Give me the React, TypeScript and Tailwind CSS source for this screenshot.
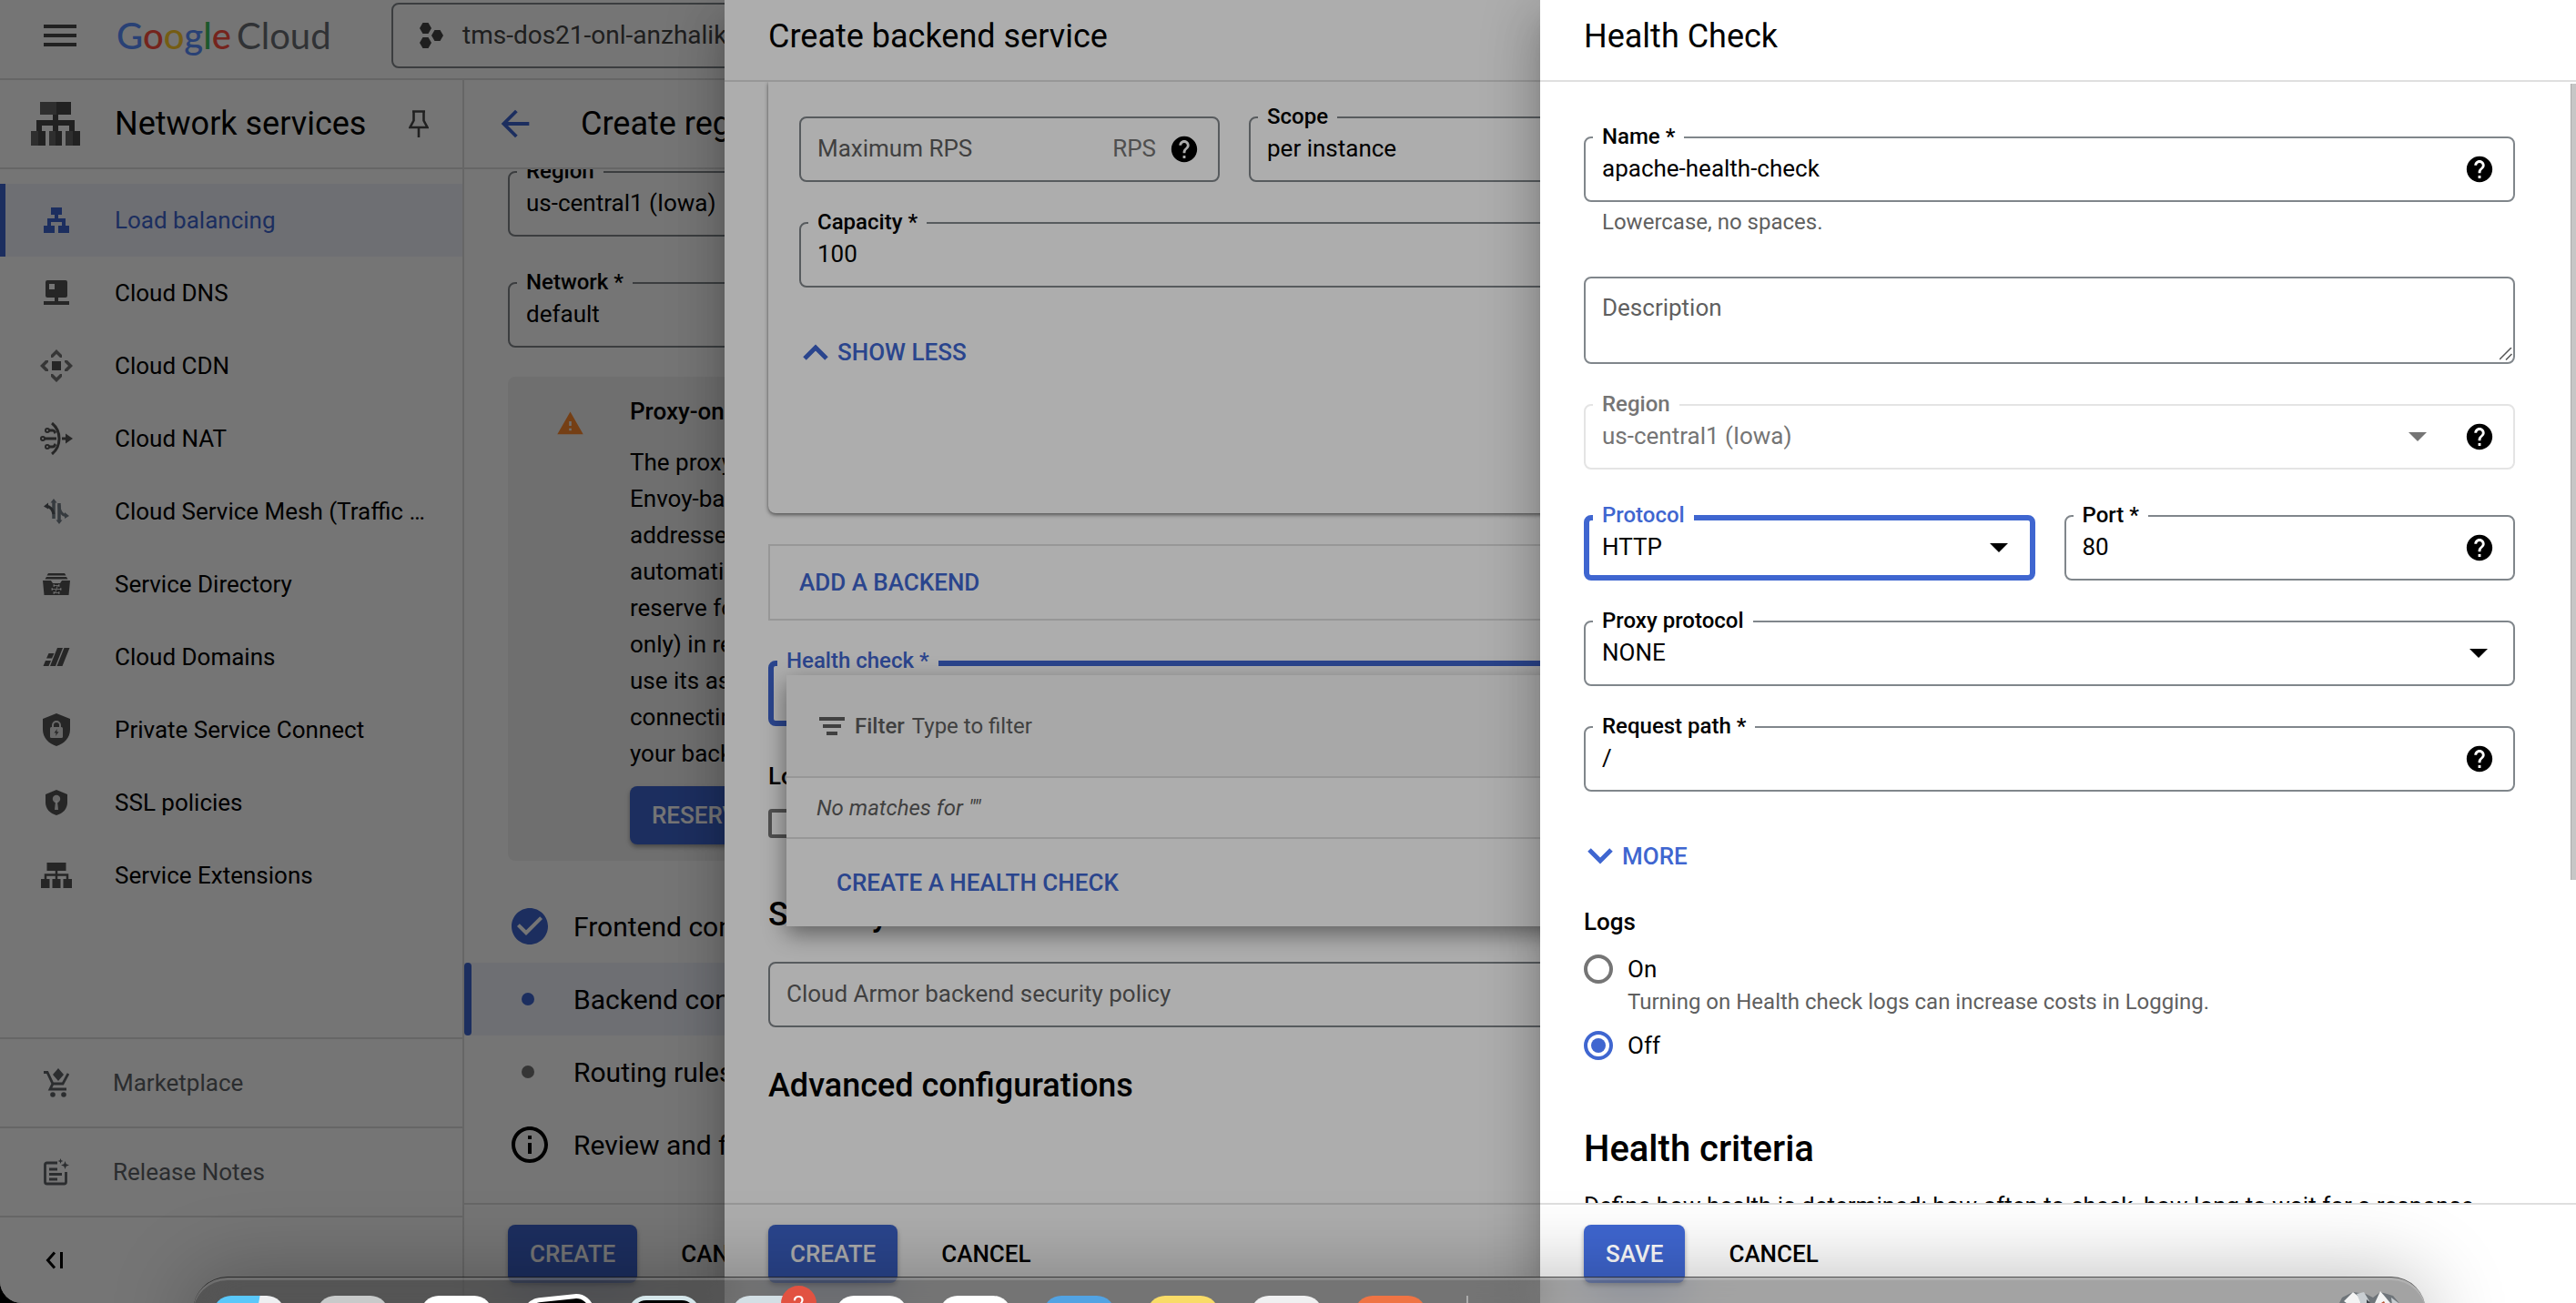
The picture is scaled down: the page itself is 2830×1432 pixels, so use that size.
import React, { useState } from 'react';
import { MdArrowBack, MdCheckCircle, MdHelp, MdInfoOutline, MdWarning } from 'react-icons/md';

/* ---------- shared controls ---------- */

type FieldProps = {
  id: string;
  label?: string;
  className?: string;
  active?: boolean;
  disabled?: boolean;
  children?: React.ReactNode;
};

function Field({ id, label, className = '', active, disabled, children }: FieldProps) {
  const frame = active
    ? 'border-[6px] border-[#3f66d0] pl-[14px] pr-6'
    : disabled
      ? 'border-2 border-[#e4e4e4] pl-[18px] pr-5'
      : 'border-2 border-[#80868b] pl-[18px] pr-5';
  const tone = active ? 'text-[#3f66d0]' : disabled ? 'text-[#757575]' : 'text-black';
  const place = active ? '-top-[22px] left-1' : '-top-[18px] left-2';
  return (
    <div className={`relative flex h-[72px] items-center rounded-lg ${frame} ${className}`}>
      {label && (
        <label htmlFor={id} className={`absolute ${place} bg-white px-[10px] text-[24px] leading-8 font-medium whitespace-nowrap ${tone}`}>
          {label}
        </label>
      )}
      {children}
    </div>
  );
}

const inputClass = 'h-full min-w-0 flex-1 bg-transparent pb-[2px] text-[26px] outline-none placeholder:text-[#5f5f5f]';
const selectClass = 'h-full min-w-0 flex-1 appearance-none bg-transparent pb-[2px] text-[26px] opacity-100 outline-none';

function Help() {
  return (
    <button type="button" aria-label="Help" className="shrink-0">
      <MdHelp className="size-[34px]" />
    </button>
  );
}

function Caret({ className = 'mr-2' }: { className?: string }) {
  return (
    <svg viewBox="0 0 20 10" className={`pointer-events-none h-[10px] w-5 shrink-0 ${className}`} fill="currentColor" aria-hidden="true">
      <path d="M0 0h20L10 10z" />
    </svg>
  );
}

function Chevron({ up }: { up?: boolean }) {
  return (
    <svg viewBox="0 0 28 18" className="h-[18px] w-7 shrink-0" fill="none" stroke="currentColor" strokeWidth="5" aria-hidden="true">
      <path d={up ? 'M2 16L14 4l12 12' : 'M2 2l12 12L26 2'} />
    </svg>
  );
}

function PrimaryButton({ children }: { children: React.ReactNode }) {
  return (
    <button type="button" className="h-16 rounded-lg bg-[#3f66d0] px-6 text-[26px] font-medium text-white shadow-[0_3px_5px_rgba(0,0,0,0.35)]">
      {children}
    </button>
  );
}

function Footer({ action }: { action: string }) {
  return (
    <footer className="flex h-[110px] shrink-0 items-start gap-12 border-t-2 border-[#dfdfdf] bg-white px-12 pt-[22px]">
      <PrimaryButton>{action}</PrimaryButton>
      <button type="button" className="h-16 text-[26px] font-medium">CANCEL</button>
    </footer>
  );
}

/* ---------- sidebar icons ---------- */

const LoadBalancingIcon = () => (
  <svg viewBox="0 0 28 28" className="size-7" fill="currentColor"><path d="M8 0h12v8h-4v4h8v8h4v8H16v-8h4v-4H8v4h4v8H0v-8h4v-8h8V8H8z" /></svg>
);
const DnsIcon = () => (
  <svg viewBox="0 0 28 28" className="size-7" fill="currentColor"><path fillRule="evenodd" d="M4 0h20a2 2 0 0 1 2 2v15a2 2 0 0 1-2 2h-8v4h12v4H0v-4h12v-4H4a2 2 0 0 1-2-2V2a2 2 0 0 1 2-2zm2 4v6h6V4z" /></svg>
);
const CdnIcon = () => (
  <svg viewBox="0 0 36 36" className="size-9" fill="currentColor">
    <path d="M13 13h10v10H13z" />
    <path opacity=".8" d="M18 0l6 6v3l-2 0-4-4-4 4h-2V6zM18 36l6-6v-3h-2l-4 4-4-4h-2v3zM0 18l6-6h3v2l-4 4 4 4v2H6zM36 18l-6-6h-3v2l4 4-4 4v2h3z" />
  </svg>
);
const NatIcon = () => (
  <svg viewBox="0 0 36 36" className="size-9" fill="none" stroke="currentColor" strokeWidth="3">
    <path d="M13 1c5 4 8 10 8 17s-3 13-8 17" />
    <path d="M5 18h13M24 18h6M10 9h4c2 0 2 2 3 3M10 27h4c2 0 2-2 3-3" />
    <circle cx="3" cy="18" r="2" strokeWidth="2" /><circle cx="8" cy="9" r="2" strokeWidth="2" /><circle cx="8" cy="27" r="2" strokeWidth="2" />
    <path d="M28 12.500l8 5.500-8 5.500z" fill="currentColor" stroke="none" />
  </svg>
);
const MeshIcon = () => (
  <svg viewBox="0 0 28 28" className="size-7 text-[#77808a]" fill="none" stroke="currentColor" strokeWidth="3.500">
    <path d="M11 22V3M17 5v20" />
    <path d="M11 0L7.500 4.500h7zM17 28l-3.500-4.500h7z" fill="currentColor" stroke="none" />
    <path d="M17 7c0 7 3 11 8 12" strokeWidth="3" /><path d="M28 19l-5-4v7z" fill="currentColor" stroke="none" />
    <path d="M3 8c5 1 7 4 8 9" stroke="#55595e" strokeWidth="3" /><path d="M0 8.500l5-4v7z" fill="#55595e" stroke="none" />
  </svg>
);
const DirectoryIcon = () => (
  <svg viewBox="0 0 30 24" className="h-6 w-[30px]" fill="currentColor">
    <path d="M6 0h18l1.500 2.500h-21zM4 4h22l1.500 2.500h-25z" />
    <path d="M0 8h9l2 3h8l2-3h9l-1.500 16h-27z" />
    <path d="M12 13.500h6M10 17.500h10M12 21.500h6M16.500 13l-3 9" stroke="#fff" strokeWidth="1" opacity=".8" />
    <path d="M11.500 13.500h1.500M17 13.500h1.500M9.500 17.500H11M19 17.500h1.500M11.500 21.500H13M17 21.500h1.500" stroke="#fff" strokeWidth="2.500" opacity=".8" />
  </svg>
);
const DomainsIcon = () => (
  <svg viewBox="0 0 30 20" className="h-5 w-[30px]" fill="currentColor">
    <path d="M23.500 0h6l-8 20h-6zM16 0h6l-8 20H8zM6.500 6h6L10 11.500H4zM3 14h6l-2.500 6h-6z" />
  </svg>
);
const PscIcon = () => (
  <svg viewBox="0 0 30 36" className="h-9 w-[30px]" fill="currentColor">
    <path d="M15 0l15 6v12c0 8.500-6.500 15.500-15 18C6.500 33.500 0 26.500 0 18V6z" />
    <rect x="8" y="15" width="14" height="12" rx="1.500" fill="#fff" opacity=".85" />
    <path d="M11 15v-2a4 4 0 0 1 8 0v2" stroke="#fff" strokeWidth="2" fill="none" opacity=".85" />
    <path d="M15.800 17L12.500 21.500h2.200l-.6 3.500 3.400-4.800h-2.200z" />
  </svg>
);
const SslIcon = () => (
  <svg viewBox="0 0 24 28" className="h-7 w-6" fill="currentColor">
    <path d="M12 0l12 5v9c0 7-5 12-12 14C5 26 0 21 0 14V5z" />
    <circle cx="12" cy="10" r="4.200" fill="#fff" opacity=".85" /><path d="M11 12h2l1 10h-4z" fill="#fff" opacity=".85" />
  </svg>
);
const ExtensionsIcon = () => (
  <svg viewBox="0 0 34 28" className="h-7 w-[34px]" fill="currentColor">
    <path d="M6.500 0h21v9h-21zM0 18h9.500v10H0zM12.500 18h9v10h-9zM24.500 18H34v10h-9.500z" />
    <path d="M17 8v11M5 19v-5.500h24V19" stroke="currentColor" strokeWidth="2.500" fill="none" />
  </svg>
);
const MarketplaceIcon = () => (
  <svg viewBox="0 0 28 32" className="h-8 w-7" fill="none" stroke="currentColor" strokeWidth="2.800">
    <path d="M0 4.500h4l6 12.500h11l6-11M10 17l-3 6h18" />
    <path d="M16 0l6 7-6 7-6-7z" fill="currentColor" stroke="none" />
    <circle cx="10" cy="29" r="2.800" fill="currentColor" stroke="none" /><circle cx="22" cy="29" r="2.800" fill="currentColor" stroke="none" />
  </svg>
);
const ReleaseIcon = () => (
  <svg viewBox="0 0 28 30" className="h-[30px] w-7" fill="none" stroke="currentColor" strokeWidth="2.800">
    <path d="M15 5H3.500A2 2 0 0 0 1.500 7v19a2 2 0 0 0 2 2h19a2 2 0 0 0 2-2V15" />
    <path d="M6 12h9M6 17.500h14M6 23h9" />
    <path d="M23.500 3l1.200 3.300L28 7.500l-3.300 1.200L23.500 12l-1.200-3.300L19 7.500l3.300-1.200zM18.500 0l.8 2.200 2.200.8-2.200.8-.8 2.200-.8-2.200-2.200-.8 2.200-.8z" fill="currentColor" stroke="none" />
  </svg>
);

const navItems: { label: string; icon: React.ReactNode; current?: boolean }[] = [
  { label: 'Load balancing', icon: <LoadBalancingIcon />, current: true },
  { label: 'Cloud DNS', icon: <DnsIcon /> },
  { label: 'Cloud CDN', icon: <CdnIcon /> },
  { label: 'Cloud NAT', icon: <NatIcon /> },
  { label: 'Cloud Service Mesh (Traffic Director)', icon: <MeshIcon /> },
  { label: 'Service Directory', icon: <DirectoryIcon /> },
  { label: 'Cloud Domains', icon: <DomainsIcon /> },
  { label: 'Private Service Connect', icon: <PscIcon /> },
  { label: 'SSL policies', icon: <SslIcon /> },
  { label: 'Service Extensions', icon: <ExtensionsIcon /> },
];

function TopBar() {
  return (
    <header className="flex h-[88px] shrink-0 items-center border-b-2 border-[#dfdfdf] pb-2 pl-12">
      <button type="button" aria-label="Main menu" className="text-[#4a4a4a]">
        <svg viewBox="0 0 36 24" className="h-6 w-9" fill="currentColor"><path d="M0 0h36v4H0zM0 10h36v4H0zM0 20h36v4H0z" /></svg>
      </button>
      <a href="#home" className="ml-11 flex w-[302px] gap-[6px] font-[Lato] text-[40px] leading-[56px] whitespace-nowrap">
        <span className="font-medium">
          <span className="text-[#5a90ff]">G</span><span className="text-[#ff5040]">o</span><span className="text-[#ffca2c]">o</span><span className="text-[#5a90ff]">g</span><span className="text-[#40c060]">l</span><span className="text-[#ff5040]">e</span>
        </span>
        <span className="text-[#6a6e73]">Cloud</span>
      </a>
      <button type="button" className="flex h-[72px] w-[480px] items-center gap-[21px] rounded-lg border-2 border-[#80868b] pl-[29px] text-[28px] text-[#444]">
        <svg viewBox="0 0 26 28" className="h-7 w-[26px] shrink-0" fill="currentColor">
          <path d="M3.500 0h6L13 6l-3.500 6h-6L0 6zM3.500 16h6l3.500 6-3.500 6h-6L0 22zM16.500 8h6l3.500 6-3.500 6h-6L13 14z" />
        </svg>
        tms-dos21-onl-anzhalika
      </button>
    </header>
  );
}

function Sidebar() {
  return (
    <aside className="flex w-[510px] shrink-0 flex-col border-r-2 border-[#dfdfdf]">
      <div className="flex h-[98px] shrink-0 items-center border-b-2 border-[#dfdfdf] pl-[34px]">
        <svg viewBox="0 0 54 48" className="h-12 w-[54px] text-[#666]" fill="currentColor">
          <path d="M10 0h34v14H10zM0 32h16v16H0zM20 32h14v16H20zM38 32h16v16H38z" />
          <path fill="#4a4a4a" d="M28 0h16v14H28zM8 32h8v16H8zM27 32h7v16h-7zM46 32h8v16h-8zM24 14h6v6h18v12h-6v-6H30v6h-6v-6H12v6H6V20h18z" />
        </svg>
        <h2 className="ml-[38px] text-[36px] leading-[48px]">Network services</h2>
        <button type="button" aria-label="Pin" className="ml-auto mr-[37px] text-[#4a4a4a]">
          <svg viewBox="0 0 22 30" className="h-[30px] w-[22px]" fill="none" stroke="currentColor" strokeWidth="2.600">
            <path d="M4 1.500h14M5.500 2v9.500L1.500 19h19l-4-7.500V2M11 19v11" />
          </svg>
        </button>
      </div>
      <nav className="pt-4">
        {navItems.map((item) => (
          <a
            key={item.label}
            href="#nav"
            className={`flex h-20 items-center border-l-[6px] pr-9 text-[26px] ${item.current ? 'border-[#3f66d0] bg-[#eff2fb] text-[#3f66d0]' : 'border-transparent'}`}
          >
            <span className={`ml-[38px] flex w-9 shrink-0 justify-center ${item.current ? '' : 'text-[#555]'}`}>{item.icon}</span>
            <span className="ml-[46px] truncate">{item.label}</span>
          </a>
        ))}
      </nav>
      <div className="mt-auto">
        <a href="#marketplace" className="flex h-[98px] items-center border-t-2 border-[#dfdfdf] pl-12 text-[26px] text-[#5f6368]">
          <MarketplaceIcon /><span className="ml-12">Marketplace</span>
        </a>
        <a href="#release-notes" className="flex h-[98px] items-center border-t-2 border-[#dfdfdf] pl-12 text-[26px] text-[#5f6368]">
          <ReleaseIcon /><span className="ml-12">Release Notes</span>
        </a>
        <div className="flex h-24 items-center border-t-2 border-[#dfdfdf] pl-[50px]">
          <button type="button" aria-label="Collapse navigation">
            <svg viewBox="0 0 20 20" className="size-5" fill="none" stroke="currentColor" strokeWidth="3"><path d="M10 1.500L2.500 10l7.500 8.500M17.500 1v18" /></svg>
          </button>
        </div>
      </div>
    </aside>
  );
}

const noticeLines = ['The proxy-only subnet', 'Envoy-based proxies', 'addresses that are', 'automatically set', 'reserve for (proxy', 'only) in region and', 'use its assigned', 'connecting to', 'your backends.'];

function StepRow({ label, icon, current }: { label: string; icon: React.ReactNode; current?: boolean }) {
  return (
    <li className={`flex h-20 items-center text-[30px] ${current ? 'bg-[#eff2fb]' : ''}`}>
      <span className={`h-full w-2 rounded ${current ? 'bg-[#3f66d0]' : ''}`} />
      <span className="ml-10 flex w-12 justify-center">{icon}</span>
      <span className="ml-6">{label}</span>
    </li>
  );
}

function MainPage() {
  const [region, setRegion] = useState('us-central1 (Iowa)');
  const [network, setNetwork] = useState('default');
  return (
    <main className="flex min-w-0 flex-1 flex-col">
      <div className="flex h-[98px] shrink-0 items-center border-b-2 border-[#dfdfdf] pl-[33px]">
        <button type="button" aria-label="Back" className="text-[#3f66d0]"><MdArrowBack className="size-[46px]" /></button>
        <h1 className="ml-[49px] text-[36px] leading-[48px] whitespace-nowrap">Create regional load balancer</h1>
      </div>
      <div className="min-h-0 flex-1 overflow-hidden pt-[2px]">
        <div className="w-[700px] pl-12">
          <Field id="page-region" label="Region">
            <input id="page-region" className={inputClass} value={region} onChange={(e) => setRegion(e.target.value)} />
          </Field>
          <Field id="page-network" label="Network *" className="mt-[50px]">
            <input id="page-network" className={inputClass} value={network} onChange={(e) => setNetwork(e.target.value)} />
          </Field>
          <section className="mt-8 flex rounded-lg bg-[#f2f2f2] pt-[18px] pb-[18px] pl-[53px]">
            <MdWarning className="mt-[18px] size-[31px] shrink-0 text-[#ff8a30]" />
            <div className="ml-[50px] text-[26px] leading-10 whitespace-nowrap">
              <h3 className="font-medium">Proxy-only subnet required</h3>
              <p className="mt-4 mb-4">{noticeLines.map((line) => <span key={line} className="block">{line}</span>)}</p>
              <PrimaryButton>RESERVE SUBNET</PrimaryButton>
            </div>
          </section>
        </div>
        <ol className="mt-8">
          <StepRow label="Frontend configuration" icon={<MdCheckCircle className="size-12 shrink-0 text-[#3f66d0]" />} />
          <StepRow current label="Backend configuration" icon={<span className="mr-1 size-[14px] rounded-full bg-[#3f66d0]" />} />
          <StepRow label="Routing rules" icon={<span className="mr-1 size-[14px] rounded-full bg-[#757575]" />} />
          <StepRow label="Review and finalize" icon={<MdInfoOutline className="size-12 shrink-0" />} />
        </ol>
      </div>
      <Footer action="CREATE" />
    </main>
  );
}

/* ---------- drawers ---------- */

function Drawer({ title, className, children, action }: { title: string; className: string; children: React.ReactNode; action: string }) {
  return (
    <section
      aria-label={title}
      className={`absolute inset-y-0 right-0 isolate flex flex-col bg-white shadow-[0_16px_20px_-10px_rgba(0,0,0,0.2),0_32px_48px_4px_rgba(0,0,0,0.14),0_12px_60px_10px_rgba(0,0,0,0.12)] ${className}`}
    >
      <header className="h-[90px] shrink-0 border-b-2 border-[#dfdfdf] px-12">
        <h2 className="text-[36px] leading-[80px]">{title}</h2>
      </header>
      <div className="min-h-0 flex-1 overflow-hidden px-12">{children}</div>
      <Footer action={action} />
    </section>
  );
}

function BackendDrawer() {
  const [capacity, setCapacity] = useState('100');
  return (
    <Drawer title="Create backend service" className="left-[796px]" action="CREATE">
      <div className="rounded-b-lg px-[34px] pt-[38px] pb-[157px] shadow-[0_2px_4px_rgba(0,0,0,0.5),0_0_2px_rgba(0,0,0,0.15)]">
        <div className="flex gap-8">
          <Field id="max-rps" className="w-[462px]">
            <input id="max-rps" aria-label="Maximum RPS" placeholder="Maximum RPS" className={inputClass} />
            <span className="mr-[14px] pb-[2px] text-[26px] text-[#757575]">RPS</span>
            <Help />
          </Field>
          <Field id="scope" label="Scope" className="flex-1">
            <select id="scope" className={selectClass}><option>per instance</option></select>
            <Caret />
          </Field>
        </div>
        <Field id="capacity" label="Capacity *" className="mt-11">
          <input id="capacity" className={inputClass} value={capacity} onChange={(e) => setCapacity(e.target.value)} />
        </Field>
        <button type="button" className="mt-[51px] ml-1 flex h-10 items-center gap-[10px] text-[26px] font-medium text-[#3f66d0]">
          <Chevron up />
          SHOW LESS
        </button>
      </div>

      <button type="button" className="mt-[34px] flex h-[84px] w-full items-center border-2 border-[#dfdfdf] pl-8 text-[26px] font-medium text-[#3f66d0]">
        ADD A BACKEND
      </button>

      <div className="relative mt-11">
        <Field id="health-check" label="Health check *" active>
          <input id="health-check" className={inputClass} />
        </Field>
        <div className="absolute top-4 right-0 left-5 z-10 bg-white shadow-[0_8px_24px_rgba(0,0,0,0.45)]">
          <div className="flex h-[113px] items-center border-b-2 border-[#dfdfdf] bg-[#f8f8f8] pl-9 text-[24px] text-[#5f5f5f]">
            <svg viewBox="0 0 28 20" className="h-5 w-7 shrink-0" fill="currentColor" aria-hidden="true"><path d="M0 0h28v4H0zM4 8h20v4H4zM8 16h12v4H8z" /></svg>
            <label htmlFor="hc-filter" className="ml-[11px] font-medium">Filter</label>
            <input id="hc-filter" placeholder="Type to filter" className="ml-2 flex-1 bg-transparent outline-none placeholder:text-[#5f5f5f]" />
          </div>
          <p className="flex h-[67px] items-center border-b-2 border-[#dfdfdf] pl-[33px] text-[24px] text-[#5f5f5f] italic">No matches for ""</p>
          <button type="button" className="flex h-24 w-full items-center pl-[55px] text-[26px] font-medium text-[#3f66d0]">CREATE A HEALTH CHECK</button>
        </div>
      </div>

      <h3 className="mt-[35px] text-[26px] leading-10 font-medium">Logging</h3>
      <input type="checkbox" aria-label="Enable logging" className="mt-4 block size-8 appearance-none rounded border-4 border-[#757575]" />
      <h2 className="mt-[60px] text-[36px] leading-[48px] font-medium">Security</h2>
      <Field id="armor" className="mt-7">
        <input id="armor" aria-label="Cloud Armor backend security policy" placeholder="Cloud Armor backend security policy" className={inputClass} />
      </Field>
      <h2 className="mt-10 text-[36px] leading-[48px] font-medium">Advanced configurations</h2>
    </Drawer>
  );
}

const radioClass =
  'size-8 shrink-0 appearance-none rounded-full border-4 border-[#757575] bg-clip-content p-1 checked:border-[#3f66d0] checked:bg-[#3f66d0]';

function HealthCheckDrawer() {
  const [name, setName] = useState('apache-health-check');
  const [port, setPort] = useState('80');
  const [path, setPath] = useState('/');
  const [logs, setLogs] = useState('off');
  return (
    <Drawer title="Health Check" className="w-[1138px]" action="SAVE">
      <form className="pt-[60px] pr-[19px]">
        <Field id="hc-name" label="Name *">
          <input id="hc-name" className={inputClass} value={name} onChange={(e) => setName(e.target.value)} />
          <Help />
        </Field>
        <p className="mt-[6px] pl-5 text-[24px] leading-8 text-[#5f5f5f]">Lowercase, no spaces.</p>

        <div className="relative mt-11 h-24">
          <textarea
            aria-label="Description"
            placeholder="Description"
            className="block h-full w-full resize-none rounded-lg border-2 border-[#80868b] px-[18px] py-3 text-[26px] leading-10 outline-none placeholder:text-[#5f5f5f]"
          />
          <svg viewBox="0 0 14 14" className="absolute right-[3px] bottom-1 size-[14px]" stroke="#555" strokeWidth="1.500" aria-hidden="true">
            <path d="M0 13L13 0M7 13.500L13.500 7" />
          </svg>
        </div>

        <Field id="hc-region" label="Region" disabled className="mt-11">
          <select id="hc-region" disabled className={`${selectClass} text-[#757575]`}><option>us-central1 (Iowa)</option></select>
          <Caret className="mr-[41px] text-[#757575]" />
          <Help />
        </Field>

        <div className="mt-[50px] grid grid-cols-2 gap-8">
          <Field id="hc-protocol" label="Protocol" active>
            <select id="hc-protocol" className={selectClass}><option>HTTP</option></select>
            <Caret className="" />
          </Field>
          <Field id="hc-port" label="Port *">
            <input id="hc-port" className={inputClass} value={port} onChange={(e) => setPort(e.target.value)} />
            <Help />
          </Field>
        </div>

        <Field id="hc-proxy" label="Proxy protocol" className="mt-11">
          <select id="hc-proxy" className={selectClass}><option>NONE</option></select>
          <Caret />
        </Field>
        <Field id="hc-path" label="Request path *" className="mt-11">
          <input id="hc-path" className={inputClass} value={path} onChange={(e) => setPath(e.target.value)} />
          <Help />
        </Field>

        <button type="button" className="mt-[51px] ml-1 flex h-10 items-center gap-[10px] text-[26px] font-medium text-[#3f66d0]">
          <Chevron />
          MORE
        </button>

        <fieldset className="mt-8">
          <legend className="text-[26px] leading-10 font-medium">Logs</legend>
          <label className="mt-3 flex h-10 items-center gap-4 text-[26px]">
            <input type="radio" name="logs" className={radioClass} checked={logs === 'on'} onChange={() => setLogs('on')} />
            On
          </label>
          <p className="pl-12 text-[24px] leading-8 text-[#5f5f5f]">Turning on Health check logs can increase costs in Logging.</p>
          <label className="mt-3 flex h-10 items-center gap-4 text-[26px]">
            <input type="radio" name="logs" className={radioClass} checked={logs === 'off'} onChange={() => setLogs('off')} />
            Off
          </label>
        </fieldset>

        <h2 className="mt-[66px] text-[40px] leading-[56px] font-medium">Health criteria</h2>
        <p className="mt-[14px] text-[26px] leading-10">Define how health is determined: how often to check, how long to wait for a response,</p>
      </form>
      <div className="absolute top-[92px] right-0 h-[875px] w-[6px] border-l border-[#aaa] bg-[#c6c6c6]" aria-hidden="true" />
    </Drawer>
  );
}

/* ---------- dock ---------- */

const tile = 'relative h-[79px] w-[79px] shrink-0 rounded-[20px]';

function Dock() {
  return (
    <div className="absolute right-[165px] -bottom-[71px] left-[212px] flex h-[100px] items-start gap-[35px] rounded-t-[38px] border-t border-black/50 bg-[rgba(44,44,44,0.435)] pt-5 pr-6 pl-[22px] shadow-[inset_0_3px_0_rgba(255,255,255,0.15),0_0_90px_rgba(0,0,0,0.28)] backdrop-blur-xl">
      <div className={`${tile} bg-[linear-gradient(100deg,#5ac8fa_55%,#eeeff1_56%)]`} />
      <div className={`${tile} bg-[#c8caca]`} />
      <div className={`${tile} flex justify-center overflow-hidden bg-white`}><span className="mt-2 size-[64px] shrink-0 rounded-full bg-[#3a82c4]" /></div>
      <div className={`${tile} -rotate-6 border-[5px] border-white bg-black`} />
      <div className={`${tile} border-[5px] border-[#d5e6ea] bg-black`} />
      <div className={`${tile} flex justify-center bg-[#d3dfe5]`}>
        <span className="mt-2 size-[50px] rounded-full bg-black" />
        <span className="absolute -top-[11px] left-[54px] flex size-[39px] items-center justify-center rounded-full bg-[#e25241] text-[24px] text-white">2</span>
      </div>
      <div className={`${tile} bg-white`} />
      <div className={`${tile} bg-white`} />
      <div className={`${tile} bg-[#52a3e3]`} />
      <div className={`${tile} bg-[#f9dc68]`} />
      <div className={`${tile} bg-[#f0f0f1] px-2 pt-[10px]`}><div className="h-10 rounded bg-[#8ea9d8]" /></div>
      <div className={`${tile} bg-[#ef7444]`} />
      <div className="ml-[9px] h-20 w-[2px] bg-white/40" />
      <svg viewBox="0 0 76 60" className="-mt-2 ml-auto h-[60px] w-[76px]" aria-label="Trash">
        <path d="M2 22l6-12 12-6 14 2 8 4 8-6 14 4 10 12-4 40H6z" fill="#6f757a" />
        <path d="M10 14l10-10 10 8-6 12zM44 16l6-13 11 13-6 8z" fill="#f4f4f4" />
        <path d="M24 6l8-2 6 10-8 6zM62 10l8 6-6 10z" fill="#c9ced2" />
        <path d="M26 16l8 2-5 5z" fill="#4ad0d8" /><path d="M48 18l6-4 4 8-7 6z" fill="#b5502c" />
        <path d="M35 12l6 6-6 10zM12 18l6 8-8 2z" fill="#3c4248" />
      </svg>
    </div>
  );
}

export default function App() {
  return (
    <div className="relative h-screen overflow-hidden bg-black font-[Roboto,sans-serif] text-black">
      <div className="relative h-full overflow-hidden rounded-bl-[24px] bg-white">
        <div className="flex h-full flex-col">
          <TopBar />
          <div className="flex min-h-0 flex-1">
            <Sidebar />
            <MainPage />
          </div>
        </div>
        <div className="absolute inset-0 bg-black/32" />
        <BackendDrawer />
        <div className="absolute inset-0 bg-black/32" />
        <HealthCheckDrawer />
      </div>
      <Dock />
    </div>
  );
}
